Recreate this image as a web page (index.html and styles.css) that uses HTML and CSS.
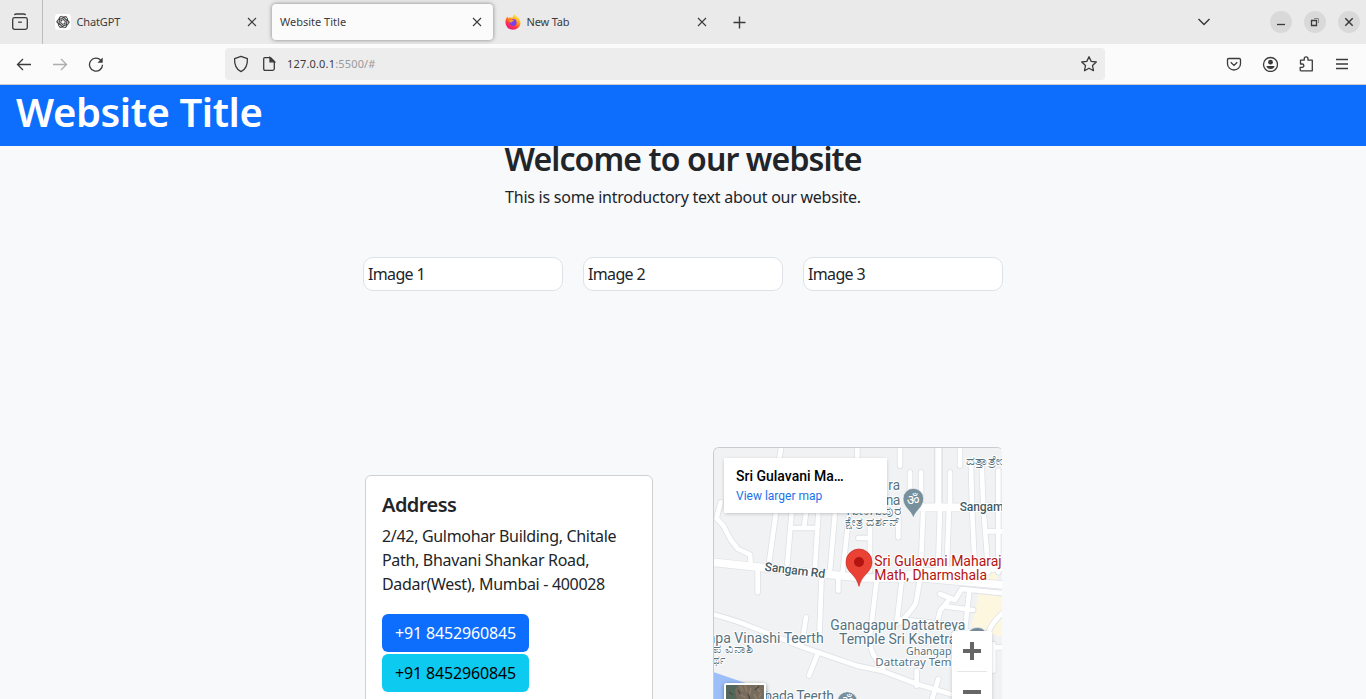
FILE: index.html
```html
<!DOCTYPE html>
<html lang="en">
<head>
<meta charset="utf-8">
<title>Website Title</title>
<link rel="stylesheet" href="styles.css">
</head>
<body>
<div class="tabstrip">
  <div class="view">
    <svg class="icon" width="20" height="20" viewBox="0 0 20 20"><path d="M4.500 3.200Q4.700 2 6 2h8q1.300 0 1.500 1.200"/><rect x="2.700" y="5.700" width="14.600" height="11.600" rx="1.800"/><path d="M8.200 10.200h3.600"/></svg>
  </div>
  <div class="tab">
    <svg class="fav" width="16" height="16" viewBox="0 0 16 16"><rect width="16" height="16" rx="3" fill="#fff"/><g fill="none" stroke="#333" stroke-width=".75"><g id="petal"><path d="M4 10.200V5a2.700 2.700 0 0 1 5-1.400M6 9.200V5.300L9.600 3.200a2.700 2.700 0 0 1 2.200-.2"/></g><use href="#petal" transform="rotate(60 8 8)"/><use href="#petal" transform="rotate(120 8 8)"/><use href="#petal" transform="rotate(180 8 8)"/><use href="#petal" transform="rotate(240 8 8)"/><use href="#petal" transform="rotate(300 8 8)"/></g></svg>
    <span>ChatGPT</span>
    <svg class="icon close" width="10" height="10" viewBox="0 0 10 10"><path d="M1 1l8 8M9 1l-8 8"/></svg>
  </div>
  <div class="tab active">
    <span>Website Title</span>
    <svg class="icon close" width="10" height="10" viewBox="0 0 10 10"><path d="M1 1l8 8M9 1l-8 8"/></svg>
  </div>
  <div class="tab">
    <svg class="fav" width="16" height="16" viewBox="0 0 16 16"><defs><linearGradient id="fx" x1=".85" y1=".1" x2=".3" y2="1"><stop offset="0" stop-color="#fff44f"/><stop offset=".4" stop-color="#ff980e"/><stop offset=".7" stop-color="#ff3647"/><stop offset="1" stop-color="#e31587"/></linearGradient></defs><path d="M9.700.200c.4 1.400 2 2 3 3.300 1.700 1.200 2.900 3.100 2.800 5.200A7.500 7.200 0 0 1 .500 8.600C.300 6 1.200 4 2.600 2.500l.6 1.700 2.200-.9 2 .9C7.600 2.500 8.500 1 9.700.2z" fill="url(#fx)"/><circle cx="8.200" cy="8.500" r="3.400" fill="#7a3ff0"/><path d="M3.500 6.200q2-1.600 4.300-.4l1.400.8q-.8 1-2.200.9-.7.600-.3 1.400-2-.5-3.200-2.700z" fill="#ff9a1f"/></svg>
    <span>New Tab</span>
    <svg class="icon close" width="10" height="10" viewBox="0 0 10 10"><path d="M1 1l8 8M9 1l-8 8"/></svg>
  </div>
  <svg class="icon plus" width="14" height="14" viewBox="0 0 14 14"><path d="M7.500 1.500v12M1.500 7.500h12"/></svg>
  <svg class="icon chevron" width="14" height="8" viewBox="0 0 14 8"><path d="M1.500 1L7 6.500 12.500 1"/></svg>
  <div class="winbtns">
    <span class="win"><svg class="icon" width="22" height="22" viewBox="0 0 22 22"><path d="M7 13.500h8"/></svg></span>
    <span class="win"><svg class="icon" width="22" height="22" viewBox="0 0 22 22"><path d="M7.500 9.500h5v5h-5z"/><path d="M10 7.500h4.500V12" stroke="#888" stroke-width="1"/></svg></span>
    <span class="win"><svg class="icon" width="22" height="22" viewBox="0 0 22 22"><path d="M7.300 7.300l7.400 7.400M14.700 7.300l-7.400 7.400" stroke-width="1.500"/></svg></span>
  </div>
</div>
<div class="toolbar">
  <div class="nav">
    <svg class="icon" width="16" height="16" viewBox="0 0 16 16"><path d="M15 8.500H1.700M7 3L1.500 8.500 7 14"/></svg>
    <svg class="icon off" width="16" height="16" viewBox="0 0 16 16"><path d="M1 8.500h13.300M9 3L14.500 8.500 9 14"/></svg>
    <svg class="icon" width="16" height="16" viewBox="0 0 16 16"><path d="M14.500 8.700A6.500 6.500 0 1 1 12.800 4.300"/><path d="M14.700 1.500v5.200H9.500z" fill="#3b3b3b" stroke="none"/></svg>
  </div>
  <div class="urlbar">
    <svg class="icon" width="16" height="18" viewBox="0 0 16 18"><path d="M8 1.300l6.400 2.400c.3 6-1.500 10.500-6.400 13C3.100 14.200 1.300 9.700 1.600 3.700z" stroke-linejoin="round"/></svg>
    <svg class="icon page" width="14" height="16" viewBox="0 0 14 16"><path d="M2.700 1.700h5.800l3.800 3.800v7.300q0 1.500-1.500 1.500H3.200q-1.500 0-1.500-1.500V3q0-1.300 1-1.300z"/><path d="M8 1.500v4.300h4.500z" fill="#3b3b3b"/></svg>
    <span class="url">127.0.0.1<i>:5500/#</i></span>
    <svg class="icon star" width="18" height="18" viewBox="0 0 18 18"><path d="M9 1.700l2.200 4.700 5.100.6-3.800 3.500 1 5.200L9 13.200l-4.500 2.500 1-5.200L1.700 7l5.100-.6z" stroke-linejoin="round"/></svg>
  </div>
  <div class="tools">
    <svg class="icon" width="16" height="16" viewBox="0 0 16 16"><path d="M2.800 2.500h10.400q1.300 0 1.300 1.300v3.900a6.500 6.300 0 0 1-13 0V3.800q0-1.300 1.300-1.300zM4.700 6.200L8 9.400l3.300-3.200"/></svg>
    <svg class="icon" width="16" height="16" viewBox="0 0 16 16"><circle cx="8.500" cy="8.500" r="7"/><circle cx="8.500" cy="6.200" r="2.400" fill="#3b3b3b" stroke="none"/><path d="M4.400 10.100h8.200Q12 13.100 8.500 13.100T4.400 10.100z" fill="#3b3b3b" stroke="none"/></svg>
    <svg class="icon" width="16" height="18" viewBox="0 0 16 18"><path d="M2.500 5.200h3.700V3.700a1.900 1.900 0 0 1 3.800 0v1.500h4.300v10.600H3q-.8 0-.8-.8v-2.700h2a1.600 1.600 0 0 0 0-3.300H2.500z" stroke-linejoin="round"/></svg>
    <svg class="icon" width="16" height="16" viewBox="0 0 16 16"><path d="M2 3.500h12M2 8h12M2 12.500h12"/></svg>
  </div>
</div>
<div class="site">
  <header class="banner"><h1>Website Title</h1></header>
  <main>
    <section class="intro"><h2>Welcome to our website</h2><p>This is some introductory text about our website.</p></section>
    <section class="gallery"><div class="thumb">Image 1</div><div class="thumb">Image 2</div><div class="thumb">Image 3</div></section>
    <section class="contact">
      <article class="address">
        <h5>Address</h5>
        <p>2/42, Gulmohar Building, Chitale<br>Path, Bhavani Shankar Road,<br>Dadar(West), Mumbai - 400028</p>
        <a class="btn">+91 8452960845</a>
        <a class="btn info">+91 8452960845</a>
      </article>
      <article class="map">
        <svg class="tiles" width="288" height="252" viewBox="12 12 864 756">
          <defs><g id="roads">
            <path d="M213 12L208 45M198 205L178 350M245 205L232 360M288 205L282 252M325 205L315 370M240 252H320M375 205L360 380M418 205L398 385M442 12V45M480 240V380M445 282H480M570 12V65M600 85V150M633 85V185M720 85V185M750 12V65M565 205V280M640 190L632 385M690 190L684 385M717 190L710 380M783 60L786 190L795 385M815 60L820 190L835 385M865 80V385M835 262H880"/>
            <path d="M24 205L32 175M24 205L20 224L40 245L62 287L84 315L120 332L122 355"/>
            <path d="M143 375V445M385 400V440M335 395L328 580M288 520L275 605M325 625L297 695M500 410L482 560Q468 620 520 672M575 410L560 540M630 405L618 475Q610 495 570 535M560 525L700 540L800 570M690 450L735 468L755 435L880 448M710 488L790 498M715 470L690 500L680 545M778 440L765 560M880 505Q840 540 830 580M620 680V725M685 705L665 770M830 610H880M850 600V680"/>
            <path d="M12 512Q80 530 120 547L280 610L440 665L520 682L620 720L740 755"/>
          </g></defs>
          <rect x="12" y="12" width="864" height="756" fill="#f1f2f4"/>
          <path d="M808 440L876 460V580L785 545ZM805 390L865 385L860 435L815 430Z" fill="#fef7e0"/>
          <path d="M12 685L100 715L240 768H12Z" fill="#9dbff9"/>
          <g fill="none" stroke-linecap="round" stroke-linejoin="round">
            <use href="#roads" stroke="#dfe2e6" stroke-width="19"/>
            <path d="M0 354L160 371L460 402H640L880 423M685 12V190M635 190H890M560 402L630 385L880 370" stroke="#dfe2e6" stroke-width="27"/>
            <use href="#roads" stroke="#fff" stroke-width="14"/>
            <path d="M0 354L160 371L460 402H640L880 423M635 190H890M560 402L630 385L880 370" stroke="#fff" stroke-width="23"/>
            <path d="M685 12V190" stroke="#fff" stroke-width="18"/>
          </g>
          <g class="place">
            <text x="535" y="137" textLength="35" lengthAdjust="spacingAndGlyphs">ra</text><text x="527" y="182" textLength="44">na</text>
            <text class="kn" x="412" y="214" textLength="160" lengthAdjust="spacingAndGlyphs">ಗಾಣಗಾಪುರ</text>
            <text class="kn" x="405" y="247" textLength="166" lengthAdjust="spacingAndGlyphs">ಕ್ಷೇತ್ರ ದರ್ಶನ್</text>
            <text class="kn" x="768" y="64" textLength="145" lengthAdjust="spacingAndGlyphs">ದತ್ತಾತ್ರೇಯ</text>
            <text x="-7" y="597" textLength="348" lengthAdjust="spacingAndGlyphs">apa Vinashi Teerth</text>
            <text class="kn" x="10" y="627" textLength="120" lengthAdjust="spacingAndGlyphs">ಪ ವಿನಾಶಿ</text>
            <text class="kn" x="10" y="660" textLength="36" lengthAdjust="spacingAndGlyphs">ರ್ಥ</text>
            <text x="361" y="558" textLength="405" lengthAdjust="spacingAndGlyphs">Ganagapur Dattatreya</text>
            <text x="387" y="600" textLength="352" lengthAdjust="spacingAndGlyphs">Temple Sri Kshetra</text>
            <text class="small" x="588" y="633" textLength="156" lengthAdjust="spacingAndGlyphs">Ghangapu</text>
            <text class="small" x="496" y="666" textLength="278" lengthAdjust="spacingAndGlyphs">Dattatray Temple</text>
            <text x="163" y="770" textLength="209">pada Teerth</text>
          </g>
          <g class="street">
            <text x="749" y="200" textLength="132">Sangam</text>
            <text x="163" y="380" textLength="182" transform="rotate(7 163 380)">Sangam Rd</text>
          </g>
          <g fill="#78909c" stroke="#fff" stroke-width="2">
            <path d="M610 223C603 198 579 190 579 164a31 31 0 0 1 62 0C641 190 617 198 610 223Z"/>
            <circle cx="412" cy="773" r="30"/><circle cx="802" cy="582" r="32"/>
          </g>
          <text class="om" x="590" y="182">ॐ</text>
          <text class="om" x="393" y="786">ॐ</text>
          <path d="M447 427C439 390 408 386 408 354a39 39 0 0 1 78 0C486 386 455 390 447 427Z" fill="#ea4335" stroke="#c5221f" stroke-width="2"/>
          <circle cx="447" cy="354" r="15" fill="#b31412"/>
          <g class="pinned">
            <text x="493" y="366" textLength="382" lengthAdjust="spacingAndGlyphs">Sri Gulavani Maharaj</text>
            <text x="493" y="408" textLength="338" lengthAdjust="spacingAndGlyphs">Math, Dharmshala</text>
          </g>
        </svg>
        <div class="place-card"><b>Sri Gulavani Ma…</b><span>View larger map</span></div>
        <div class="satellite"><svg width="38" height="16" viewBox="0 0 38 16"><path fill="#776b5e" d="M0 0h38v16H0z"/><path fill="#53675a" d="M0 0h12l-3 5 2 11H0z"/><path d="M14 1l3 5M19 0l2 7M25 3l-2 8M30 1l4 6M15 10l5 3M28 9l3 6M35 8l-2 5" stroke="#8a7a68" stroke-width="2"/><path d="M12 5l2 4M22 9l2 5M33 1l-4 4M3 7l4 3" stroke="#4e4c43" stroke-width="1.500"/></svg></div>
        <div class="zoom"><svg width="40" height="80" viewBox="0 0 40 80"><path d="M11 20h18M20 11v18M11 61h18" stroke="#666" stroke-width="4"/><path d="M5 40.500h30" stroke="#e6e6e6"/></svg></div>
      </article>
    </section>
  </main>
</div>
</body>
</html>
```
FILE: styles.css
```css
* { box-sizing: border-box; }
html, body { height: 100%; }
body {
  margin: 0;
  height: 699px;
  overflow: hidden;
  display: flex;
  flex-direction: column;
  font: 16px/24px "Noto Sans", sans-serif;
  color: #212529;
  background: #f8f9fa;
}
svg { display: block; flex: none; }
h1, h2, h5, p { margin: 0; font-weight: 600; }
p { font-weight: 400; }
.icon { fill: none; stroke: #3b3b3b; stroke-width: 1.3; }

.tabstrip { display: flex; align-items: center; flex: none; height: 44px; background: #eaeaea; font-size: 11px; letter-spacing: -.15px; }
.view { width: 43px; height: 44px; padding: 12px 0 0 10px; border-right: 1px solid #bdbdbd; }
.tab { display: flex; align-items: center; width: 221px; height: 36px; margin-left: 4px; padding: 0 11px 0 8px; border-radius: 4px; color: #3b3b3b; }
.tab .close { margin-left: auto; stroke-width: 1.1; }
.fav { margin-right: 5.500px; }
.active { background: #fbfbfb; box-shadow: 0 0 4px rgba(0, 0, 0, .45); letter-spacing: 0; }
.plus { margin-left: 14px; stroke-width: 1.4; }
.chevron { margin-left: auto; stroke-width: 1.5; }
.winbtns { display: flex; gap: 12px; margin: 0 6px 0 59px; }
.win { width: 22px; height: 22px; border-radius: 50%; background: #d9d9d9; }

.toolbar { display: flex; align-items: center; flex: none; height: 41px; background: #fbfbfb; border-bottom: 1px solid #ccc; }
.nav { display: flex; gap: 20px; width: 225px; padding-left: 16px; }
.off { opacity: .4; }
.urlbar { display: flex; align-items: center; width: 880px; height: 32px; padding: 0 7px 0 8px; border-radius: 4px; background: #ededed; }
.page { margin-left: 13px; }
.url { margin-left: 11px; font-size: 11px; letter-spacing: .17px; color: #3b3b3b; }
.url i { font-style: normal; color: #999; }
.star { margin-left: auto; }
.tools { display: flex; align-items: center; gap: 20px; margin-left: auto; padding-right: 16px; }

.site { flex: 1; min-height: 0; overflow: hidden; }
.banner { position: relative; z-index: 1; height: 61px; padding: 3px 16px; background: #0d6efd; color: #fff; }
h1 { font-size: 40px; line-height: 48px; letter-spacing: -.42px; }
main { width: 640px; margin: -6px auto 0; }
.intro { text-align: center; }
h2 { margin-bottom: 7px; font-size: 32px; line-height: 38px; letter-spacing: -.88px; }
.intro p { letter-spacing: -.24px; }
.gallery { display: grid; grid-template-columns: repeat(3, 200px); gap: 20px; margin-top: 48px; }
.thumb { height: 34px; padding: 4px; border: 1px solid #dee2e6; border-radius: 10px; background: #fff; letter-spacing: -.65px; }
.contact { display: flex; justify-content: space-between; align-items: flex-start; margin: 156px 0 0 2px; }
.address { width: 288px; height: 300px; margin-top: 28px; padding: 17px 16px; border: 1px solid #d0d1d2; border-radius: 6px; background: #fff; }
h5 { margin-bottom: 7px; font-size: 20px; line-height: 24px; letter-spacing: -.55px; }
.address p { margin-bottom: 18px; letter-spacing: -.32px; white-space: nowrap; }
.btn { display: block; width: 147px; height: 38px; margin-bottom: 2px; padding: 7px 0; border-radius: 6px; background: #0d6efd; color: #fff; text-align: center; letter-spacing: -.15px; }
.info { background: #0dcaf0; color: #000; }

.map { position: relative; width: 290px; height: 300px; border: 1px solid #c9cbce; border-right-color: #f8f9fa; border-radius: 6px; overflow: hidden; }
.tiles text { font: 42px Roboto, sans-serif; paint-order: stroke; stroke: #fff; stroke-width: 6px; stroke-linejoin: round; }
.tiles .place text { fill: #56737f; }
.tiles text.kn { font: 36px "Noto Sans", sans-serif; }
.tiles text.small { font: 34px "Noto Sans", sans-serif; }
.tiles .street text { font-size: 37px; font-weight: 500; fill: #455a64; }
.tiles .pinned text { fill: #b31412; }
.tiles text.om { font: 42px "Noto Sans", sans-serif; fill: #fff; stroke: none; }
.place-card { position: absolute; left: 10px; top: 10px; display: flex; flex-direction: column; width: 163px; height: 55px; padding: 9px 12px; background: #fff; box-shadow: 0 1px 4px -1px rgba(0, 0, 0, .3); font: 12px/20px Roboto, sans-serif; color: #1a73e8; }
.place-card b { font-size: 14px; font-weight: 500; line-height: 19px; color: #000; }
.satellite { position: absolute; left: 10px; top: 235px; padding: 2px; border-radius: 2px; background: #fff; box-shadow: 0 1px 4px rgba(0, 0, 0, .4); }
.zoom { position: absolute; left: 238px; top: 183px; width: 40px; border-radius: 2px; background: #fff; box-shadow: 0 1px 4px -1px rgba(0, 0, 0, .3); }
```
